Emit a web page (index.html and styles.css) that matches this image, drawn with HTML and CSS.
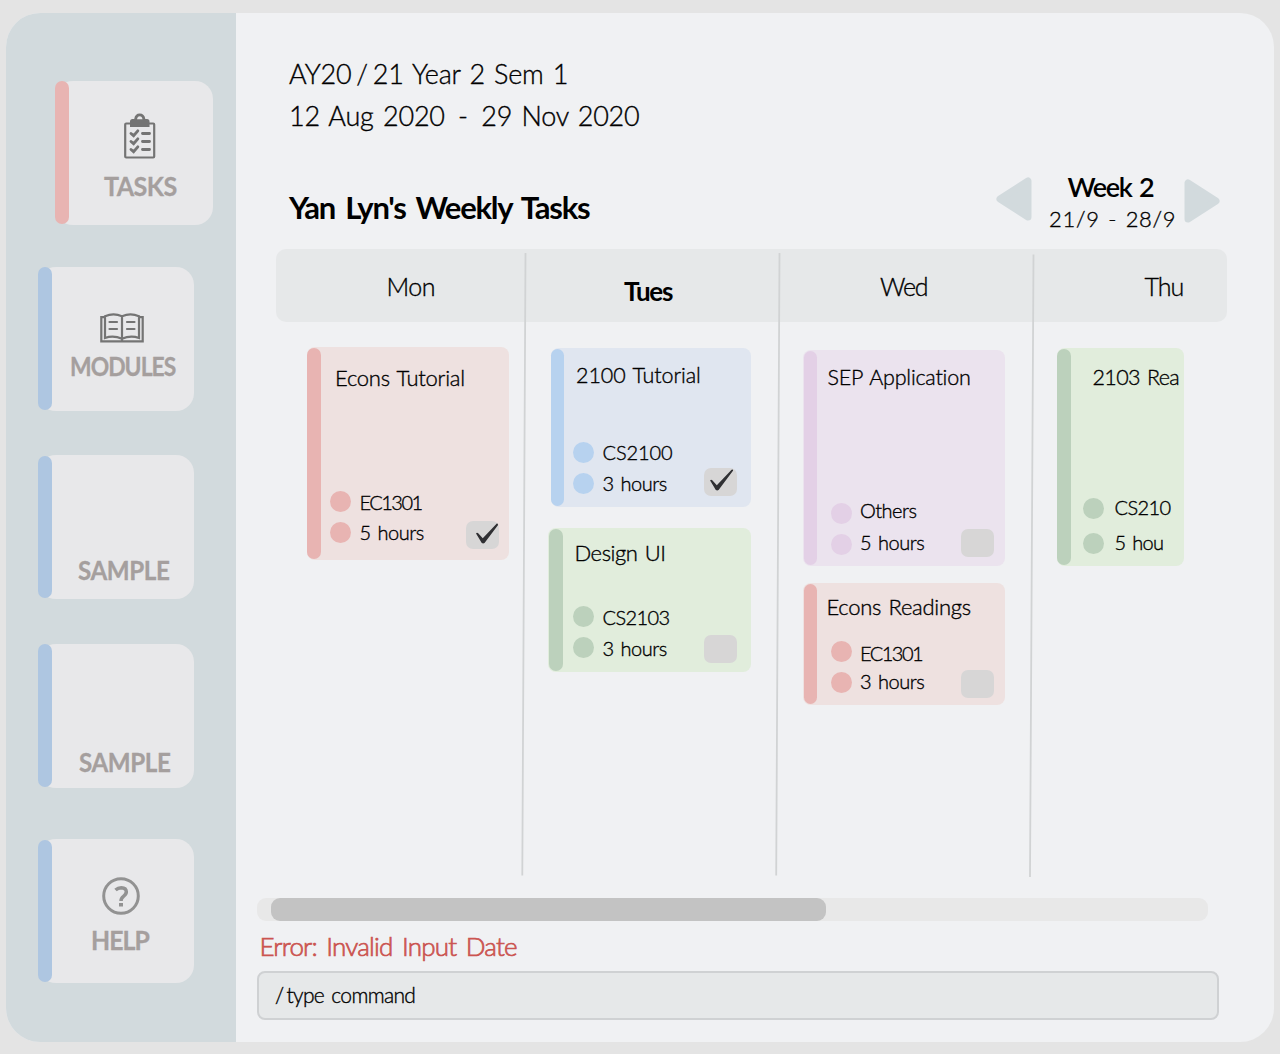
FILE: index.html
```html
<!DOCTYPE html>
<html lang="en">
<head>
<meta charset="utf-8">
<title>Weekly Tasks</title>
<link rel="stylesheet" href="styles.css">
</head>
<body>
<svg class="defs" width="0" height="0" aria-hidden="true">
  <symbol id="tick" viewBox="0 0 34 28"><path d="M10.2 12.4Q11 11.2 12.4 12.2L17 17.4L32 1.6Q33.4 1 33.6 2.4L18.8 22Q17.4 23 16 22Z" fill="#303033"/></symbol>
</svg>
<div class="app">
  <nav class="sidebar">
    <a class="nav nav-tasks">
      <svg class="icon" width="32" height="46" viewBox="0 0 32 46" fill="none" stroke="#747474">
        <rect x="1.2" y="10.5" width="29" height="34" rx="1" stroke-width="2.2"/>
        <path d="M6 14V8.500Q6 6 8.500 6H10.200Q11 .5 15.700 .5Q20.500 .5 21.300 6H23Q25.500 6 25.500 8.500V14Z" fill="#747474" stroke="none"/>
        <path d="M13 6.300Q13.500 3.300 15.700 3.300Q18 3.300 18.500 6.300Z" fill="#e8e8ea" stroke="none"/>
        <path d="M7 20.500l2.600 2.200 4.200-4.800M7 28.500l2.600 2.200 4.200-4.800M7 36.500l2.600 2.200 4.200-4.800M18.500 20.500h7M18.500 28.500h7M18.500 36.500h7" stroke-width="2.900" stroke-linecap="round"/>
      </svg>
      <span class="label">TASKS</span>
    </a>
    <a class="nav nav-modules">
      <svg class="icon" width="44" height="30" viewBox="0 0 44 30" fill="none" stroke="#747474" stroke-width="2.200">
        <path d="M5 4.200H1.300V28.300H42.700V4.200H39"/>
        <path d="M5 25V3.200Q13.500 -.3 22 3.200V25.800Q13.500 22 5 25ZM39 25V3.200Q30.500 -.3 22 3.200V25.800Q30.500 22 39 25ZM22 25v3.500"/>
        <path d="M9.500 9h7.500M9.500 16h7.500M27 9h7.500M27 16h7.500" stroke-linecap="round"/>
      </svg>
      <span class="label">MODULES</span>
    </a>
    <a class="nav nav-sample"><span class="label">SAMPLE</span></a>
    <a class="nav nav-sample-2"><span class="label">SAMPLE</span></a>
    <a class="nav nav-help">
      <svg class="icon" width="38" height="38" viewBox="0 0 38 38" fill="none" stroke="#929292">
        <circle cx="19" cy="19" r="17.300" stroke-width="3"/>
        <path d="M13.500 13Q16 10.700 19.300 10.700Q24.300 10.900 24.300 14.800Q24.300 17.300 21.500 19.300Q19 21.200 19 24" stroke-width="3.500"/>
        <path d="M17 26h4v3.500h-4z" fill="#929292" stroke="none"/>
      </svg>
      <span class="label">HELP</span>
    </a>
  </nav>

  <main class="main">
    <p class="term">AY20<span class="slash">/</span>21 Year 2 Sem 1</p>
    <p class="term term-dates">12 Aug 2020 <span class="dash">-</span> 29 Nov 2020</p>
    <header class="heading">
      <h1>Yan Lyn's Weekly Tasks</h1>
      <svg class="arrow" width="36" height="44" viewBox="0 0 36 44"><path d="M4 22L32 4V40Z"/></svg>
      <div class="week">
        <strong>Week 2</strong>
        <span>21/9 - 28/9</span>
      </div>
      <svg class="arrow arrow-next" width="36" height="44" viewBox="0 0 36 44"><path d="M32 22L4 4V40Z"/></svg>
    </header>

    <section class="board">
      <div class="days">
        <span class="day mon">Mon</span>
        <strong class="day tue">Tues</strong>
        <span class="day wed">Wed</span>
        <span class="day thu">Thu</span>
      </div>
      <div class="columns">
        <div class="column col-mon">
          <article class="card red econs-tutorial">
            <h2>Econs Tutorial</h2>
            <footer>
              <div class="dots"><i></i><i></i></div>
              <div class="meta"><span class="ec">EC1301</span><span>5 hours</span></div>
              <svg class="check" viewBox="0 0 34 28"><use href="#tick"/></svg>
            </footer>
          </article>
        </div>
        <div class="column col-tue">
          <article class="card blue cs-tutorial">
            <h2>2100 Tutorial</h2>
            <footer>
              <div class="dots"><i></i><i></i></div>
              <div class="meta"><span class="cs">CS2100</span><span>3 hours</span></div>
              <svg class="check" viewBox="4 0 34 28"><use href="#tick" width="34" height="28"/></svg>
            </footer>
          </article>
          <article class="card green design">
            <h2>Design UI</h2>
            <footer>
              <div class="dots"><i></i><i></i></div>
              <div class="meta"><span class="cs2">CS2103</span><span>3 hours</span></div>
              <div class="check"></div>
            </footer>
          </article>
        </div>
        <div class="column col-wed">
          <article class="card purple sep">
            <h2>SEP Application</h2>
            <footer>
              <div class="dots"><i></i><i></i></div>
              <div class="meta"><span>Others</span><span>5 hours</span></div>
              <div class="check"></div>
            </footer>
          </article>
          <article class="card red readings">
            <h2>Econs Readings</h2>
            <footer>
              <div class="dots"><i></i><i></i></div>
              <div class="meta"><span class="ec">EC1301</span><span>3 hours</span></div>
              <div class="check"></div>
            </footer>
          </article>
        </div>
        <div class="column col-thu">
          <article class="card green cs-readings">
            <h2>2103 Rea</h2>
            <footer>
              <div class="dots"><i></i><i></i></div>
              <div class="meta"><span class="cs2">CS210</span><span class="cut">5 hou</span></div>
            </footer>
          </article>
        </div>
      </div>
      <svg class="dividers" width="951" height="630" viewBox="0 0 951 630" stroke="#d1d3d4" stroke-width="1.800">
        <path d="M249.500 4L246.300 626.500M503.500 4L500.200 626.500M757.500 5.500L754 628"/>
      </svg>
    </section>

    <div class="scrollbar"><div class="thumb"></div></div>
    <p class="error">Error: Invalid Input Date</p>
    <div class="command"><span class="prompt">/</span>type command</div>
  </main>
</div>
</body>
</html>
```
FILE: styles.css
```css
* { box-sizing: border-box; }
body {
  margin: 0;
  padding: 13px 6px 12px;
  background: #e4e4e4;
  color: #000;
  font-family: Lato, "Open Sans", sans-serif;
  font-weight: 300;
  font-variant-ligatures: none;
  -webkit-text-stroke: .35px;
}
p, h1, h2 { margin: 0; font-weight: inherit; }
svg { display: block; flex: none; }
.defs { position: absolute; }
.app {
  display: flex;
  width: 1268px;
  height: 1029px;
  overflow: hidden;
  border-radius: 34px;
  background: #f0f1f3;
}

/* Sidebar */
.sidebar {
  flex: none;
  display: flex;
  flex-direction: column;
  width: 230px;
  padding: 67.500px 0 0 32px;
  background: #d2dadd;
}
.nav {
  position: relative;
  flex: none;
  display: flex;
  flex-direction: column;
  align-items: flex-start;
  width: 156px;
  height: 144px;
  border-radius: 18px;
  background: #e8e8ea;
}
.nav::before {
  content: "";
  position: absolute;
  inset: 1px auto 1px -.5px;
  width: 14px;
  border-radius: 7px;
  background: #aec6e1;
}
.nav-tasks { width: 158px; margin-left: 17px; margin-bottom: 42px; padding: 32px 0 0 49px; }
.nav-tasks::before { top: 0; left: 0; background: #e8b4b2; }
.nav-modules { margin-bottom: 44px; padding: 46px 0 0 31.500px; }
.nav-modules::before { top: 0; }
.nav-sample { margin-bottom: 45.500px; padding: 101.500px 0 0 39.500px; }
.nav-sample-2 { margin-bottom: 51px; padding: 103.500px 0 0 41px; }
.nav-sample-2::before { top: 0; }
.nav-help { padding: 38px 0 0 52.500px; }
.label {
  color: #a59f9e;
  font-size: 27px;
  font-weight: 700;
  line-height: 28px;
  letter-spacing: -.6px;
  transform: scaleX(.93);
  transform-origin: left;
  -webkit-text-stroke: .3px;
}
.nav-tasks .icon { margin-left: 20px; margin-bottom: 13.500px; }
.nav-modules .icon { margin-left: 30.500px; margin-bottom: 9px; }
.nav-modules .label { font-size: 26px; letter-spacing: -1.100px; transform: scaleX(.88); }
.nav-sample .label, .nav-sample-2 .label { font-size: 26px; letter-spacing: -.450px; }
.nav-help .icon { margin-left: 11.500px; margin-bottom: 11px; }
.nav-help .label { letter-spacing: -1px; transform: scaleX(.92); }

/* Main */
.main { flex: 1; padding: 47px 0 0 21px; }
.term {
  padding-left: 32px;
  font-size: 27px;
  line-height: 28px;
  word-spacing: .08em;
  letter-spacing: -.25px;
}
.slash { margin: 0 5px; }
.dash { margin: 0 4px; }
.term-dates { margin-top: 14px; letter-spacing: -.2px; }
.heading { display: flex; height: 106px; padding-left: 32px; }
.heading h1 {
  width: 707px;
  margin-top: 58.500px;
  font-size: 31px;
  font-weight: 700;
  line-height: 36px;
  letter-spacing: -1.220px;
  word-spacing: .12em;
  -webkit-text-stroke: 0;
}
.arrow { margin-top: 47px; fill: #d2dadd; stroke: #d2dadd; stroke-width: 7px; stroke-linejoin: round; }
.arrow-next { margin-top: 49px; margin-left: 4px; }
.week { width: 148px; padding-top: 42px; word-spacing: .12em; }
.week strong {
  display: block;
  margin-left: 35.500px;
  font-size: 27px;
  font-weight: 600;
  line-height: 30px;
  letter-spacing: -1.300px;
  -webkit-text-stroke: 0;
}
.week span {
  display: block;
  margin: 5px 0 0 17px;
  font-size: 22px;
  line-height: 24px;
  letter-spacing: .7px;
}

/* Board */
.board { position: relative; width: 951px; height: 649px; margin: 13px 0 0 19px; }
.days {
  display: grid;
  grid-template-columns: 249px 254px 254px 194px;
  height: 73px;
  border-radius: 10px;
  background: #e6e8e9;
}
.day { font-size: 25px; line-height: 30px; }
.mon { padding: 22px 0 0 110.500px; letter-spacing: -.5px; }
.tue { padding: 26.500px 0 0 99px; font-size: 26px; font-weight: 700; letter-spacing: -1.240px; -webkit-text-stroke: 0; }
.wed { padding: 22px 0 0 101px; letter-spacing: -1.200px; }
.thu { padding: 22px 0 0 111.500px; letter-spacing: -1.010px; }
.columns { display: grid; grid-template-columns: 249px 254px 254px 194px; }
.column { display: flex; flex-direction: column; padding-top: 25px; }
.col-mon { padding-left: 31px; }
.col-tue { padding: 26px 0 0 22.500px; }
.col-wed { padding: 28px 0 0 24px; }
.col-thu { padding: 26px 0 0 24px; }
.dividers { position: absolute; left: 0; top: 0; }

/* Cards */
.card {
  position: relative;
  display: flex;
  flex-direction: column;
  width: 202px;
  border-radius: 8px;
  background: var(--tint);
  font-size: 20px;
}
.card::before {
  content: "";
  position: absolute;
  inset: 1px auto 1px var(--stripe-left, 0);
  width: var(--stripe-width, 14px);
  border-radius: 7px;
  background: var(--accent);
}
.red { --tint: #eee1e0; --accent: #e8b4b2; }
.blue { --tint: #e0e6f0; --accent: #b7d2ef; }
.green { --tint: #e1eddc; --accent: #bcd1bc; }
.purple { --tint: #ebe3ee; --accent: #e3d0e6; }
.card h2 { font-size: 22px; line-height: 28px; white-space: nowrap; word-spacing: .08em; }
.card footer { display: flex; align-items: flex-end; margin-top: auto; }
.dots, .meta { display: flex; flex-direction: column; }
.dots i { width: 21px; height: 21px; border-radius: 50%; background: var(--accent); }
.meta { line-height: 24px; white-space: nowrap; word-spacing: .1em; letter-spacing: -.5px; }
.ec { letter-spacing: -1.520px; }
.cs { letter-spacing: -.1px; }
.cs2 { letter-spacing: -.6px; }
.cut { letter-spacing: -.7px; }
.check { width: 33.500px; height: 28px; margin-left: auto; border-radius: 7px; background: #d7d6d6; }

.econs-tutorial { height: 213px; }
.econs-tutorial h2 { padding: 17.400px 0 0 28px; letter-spacing: -.25px; }
.econs-tutorial .dots { margin: 0 8.500px 17px 23px; gap: 10px; }
.econs-tutorial .meta { margin-bottom: 16.500px; gap: 5.700px; }
.econs-tutorial .check { margin: 0 10px 11.500px auto; }

.cs-tutorial { height: 158.500px; margin-left: 3.500px; width: 199.500px; margin-bottom: 21px; --stripe-width: 12.500px; }
.cs-tutorial h2 { padding: 13px 0 0 25px; font-size: 21.500px; letter-spacing: -.05px; }
.cs-tutorial .dots { margin: 0 8.500px 12.500px 22px; gap: 10.500px; }
.cs-tutorial .meta { margin-bottom: 12px; gap: 7px; }
.cs-tutorial .check { margin: 0 13.500px 10.500px auto; }

.design { height: 144px; width: 203px; --stripe-left: 1px; }
.design h2 { padding: 11px 0 0 27px; letter-spacing: -.45px; }
.design .dots { margin: 0 8.500px 14px 25.500px; gap: 10px; }
.design .meta { margin-bottom: 12px; gap: 7px; }
.design .check { margin: 0 13.500px 9px auto; }

.sep { width: 201.500px; height: 216px; margin-bottom: 17px; --stripe-left: 1px; --stripe-width: 12.500px; }
.sep h2 { padding: 13px 0 0 24.500px; font-size: 21.500px; letter-spacing: -.22px; }
.sep .dots { margin: 0 8.500px 11px 27.500px; gap: 10.200px; }
.sep .meta { margin-bottom: 12px; gap: 7.700px; }
.sep .check { margin: 0 10.500px 9px auto; }

.readings { width: 201.500px; height: 122px; --stripe-left: 1px; --stripe-width: 12.500px; }
.readings h2 { padding: 10px 0 0 23.500px; letter-spacing: -.29px; }
.readings .dots { margin: 0 8.500px 12.500px 27.500px; gap: 10px; }
.readings .meta { margin-bottom: 12px; gap: 4.300px; }
.readings .check { margin: 0 10.500px 7px auto; }

.cs-readings { width: 127px; height: 218px; }
.cs-readings h2 { padding: 15px 0 0 35.500px; font-size: 21.500px; letter-spacing: -.6px; }
.cs-readings .dots { margin: 0 10.500px 12.500px 26px; gap: 13.500px; }
.cs-readings .meta { margin-bottom: 12px; gap: 11px; }

/* Bottom area */
.scrollbar { width: 951px; height: 22.500px; padding-left: 14px; border-radius: 9px; background: #e8e8e8; }
.thumb { width: 554.500px; height: 100%; border-radius: 9px; background: #c3c3c3; }
.error {
  margin: 11px 0 10.500px 2.500px;
  color: #cb5450;
  font-size: 26px;
  line-height: 29px;
  letter-spacing: -.8px;
  word-spacing: .12em;
  -webkit-text-stroke: .7px;
}
.command {
  width: 962px;
  height: 49px;
  padding-left: 16px;
  border: 2px solid #cfd1d3;
  border-radius: 8px;
  background: #e6e8e9;
  font-size: 21px;
  line-height: 43px;
  letter-spacing: -.65px;
  word-spacing: .1em;
}
.prompt { margin-right: 3px; }
```
